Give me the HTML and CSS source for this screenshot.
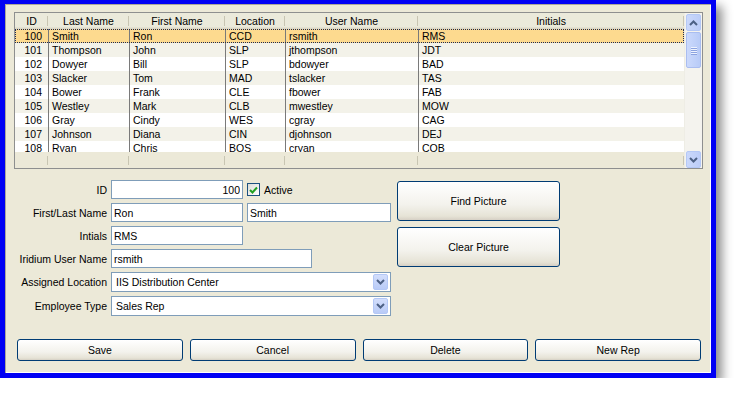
FILE: index.html
```html
<!DOCTYPE html>
<html lang="en">
<head>
    <meta charset="UTF-8">
    <title>Sales Reps</title>
    <link rel="stylesheet" href="styles.css">
</head>
<body>
    <div class="window">
        <div class="grid">
            <div class="grid-main">
                <div class="row head">
                    <div class="cell">ID</div>
                    <div class="cell">Last Name</div>
                    <div class="cell">First Name</div>
                    <div class="cell">Location</div>
                    <div class="cell">User Name</div>
                    <div class="cell">Initials</div>
                </div>
                <div class="grid-body">
                    <div class="row selected"><div class="cell num">100</div><div class="cell">Smith</div><div class="cell">Ron</div><div class="cell">CCD</div><div class="cell">rsmith</div><div class="cell">RMS</div></div>
                    <div class="row alt"><div class="cell num">101</div><div class="cell">Thompson</div><div class="cell">John</div><div class="cell">SLP</div><div class="cell">jthompson</div><div class="cell">JDT</div></div>
                    <div class="row"><div class="cell num">102</div><div class="cell">Dowyer</div><div class="cell">Bill</div><div class="cell">SLP</div><div class="cell">bdowyer</div><div class="cell">BAD</div></div>
                    <div class="row alt"><div class="cell num">103</div><div class="cell">Slacker</div><div class="cell">Tom</div><div class="cell">MAD</div><div class="cell">tslacker</div><div class="cell">TAS</div></div>
                    <div class="row"><div class="cell num">104</div><div class="cell">Bower</div><div class="cell">Frank</div><div class="cell">CLE</div><div class="cell">fbower</div><div class="cell">FAB</div></div>
                    <div class="row alt"><div class="cell num">105</div><div class="cell">Westley</div><div class="cell">Mark</div><div class="cell">CLB</div><div class="cell">mwestley</div><div class="cell">MOW</div></div>
                    <div class="row"><div class="cell num">106</div><div class="cell">Gray</div><div class="cell">Cindy</div><div class="cell">WES</div><div class="cell">cgray</div><div class="cell">CAG</div></div>
                    <div class="row alt"><div class="cell num">107</div><div class="cell">Johnson</div><div class="cell">Diana</div><div class="cell">CIN</div><div class="cell">djohnson</div><div class="cell">DEJ</div></div>
                    <div class="row"><div class="cell num">108</div><div class="cell">Ryan</div><div class="cell">Chris</div><div class="cell">BOS</div><div class="cell">cryan</div><div class="cell">COB</div></div>
                </div>
                <div class="row foot">
                    <div class="cell"></div><div class="cell"></div><div class="cell"></div><div class="cell"></div><div class="cell"></div><div class="cell"></div>
                </div>
            </div>
            <div class="vscroll">
                <div class="sb-btn">
                    <svg width="9" height="6" viewBox="0 0 9 6"><path d="M1 5 L4.5 1.5 L8 5" fill="none" stroke="#4d6185" stroke-width="2"/></svg>
                </div>
                <div class="sb-track">
                    <div class="sb-thumb">
                        <span></span><span></span><span></span><span></span>
                    </div>
                </div>
                <div class="sb-btn">
                    <svg width="9" height="6" viewBox="0 0 9 6"><path d="M1 1 L4.5 4.5 L8 1" fill="none" stroke="#4d6185" stroke-width="2"/></svg>
                </div>
            </div>
        </div>

        <div class="editor">
            <div class="fields">
                <div class="lbl">ID</div>
                <div class="line">
                    <input class="box short right" value="100">
                    <span class="check">
                        <svg width="9" height="8" viewBox="0 0 9 8"><path d="M1 4 L3.5 6.5 L8 1.5" fill="none" stroke="#21a121" stroke-width="2"/></svg>
                    </span>
                    <span>Active</span>
                </div>

                <div class="lbl">First/Last Name</div>
                <div class="line">
                    <input class="box short" value="Ron">
                    <input class="box last" value="Smith">
                </div>

                <div class="lbl">Intials</div>
                <div class="line"><input class="box short" value="RMS"></div>

                <div class="lbl">Iridium User Name</div>
                <div class="line"><input class="box medium" value="rsmith"></div>

                <div class="lbl">Assigned Location</div>
                <div class="combo">
                    <span>IIS Distribution Center</span>
                    <span class="drop"><svg width="9" height="6" viewBox="0 0 9 6"><path d="M1 1 L4.5 4.5 L8 1" fill="none" stroke="#4d6185" stroke-width="2"/></svg></span>
                </div>

                <div class="lbl">Employee Type</div>
                <div class="combo">
                    <span>Sales Rep</span>
                    <span class="drop"><svg width="9" height="6" viewBox="0 0 9 6"><path d="M1 1 L4.5 4.5 L8 1" fill="none" stroke="#4d6185" stroke-width="2"/></svg></span>
                </div>
            </div>
            <div class="pic-buttons">
                <button class="btn tall">Find Picture</button>
                <button class="btn tall">Clear Picture</button>
            </div>
        </div>

        <div class="actions">
            <button class="btn">Save</button>
            <button class="btn">Cancel</button>
            <button class="btn">Delete</button>
            <button class="btn">New Rep</button>
        </div>
    </div>
</body>
</html>
```

FILE: styles.css
```css
body {
    margin: 0;
    background: #fff;
    font-family: "Liberation Sans", Arial, sans-serif;
    font-size: 10.5px;
    color: #000;
}

.window {
    width: 706px;
    height: 369px;
    border: 5px solid #0000f4;
    border-top-width: 4px;
    background: #ece9d8;
    box-shadow: inset 1px 1px 0 #aca899, inset -1px -1px 0 #fff, 6px 6px 10px rgba(0, 0, 0, 0.45);
}

/* list view */
.grid {
    display: flex;
    width: 687px;
    height: 155px;
    margin: 8px 0 0 9px;
    border: 1px solid #8e8f8f;
    background: #fff;
}

.grid-main {
    width: 670px;
    display: flex;
    flex-direction: column;
}

.row {
    display: grid;
    grid-template-columns: 33px 81px 96px 60px 133px 1fr;
    height: 14px;
    line-height: 14px;
}

.cell {
    white-space: nowrap;
    overflow: hidden;
    padding-left: 3px;
    border-left: 1px solid #7a7a7a;
}

.cell:first-child {
    border-left: none;
}

.cell.num {
    text-align: right;
    padding-right: 6px;
}

.row.alt {
    background: #f3f2e9;
}

.row.selected {
    background: #fdda8f;
    outline: 1px dotted #1c2a55;
    outline-offset: -1px;
}

.row.head {
    height: 16px;
    line-height: 16px;
    background: linear-gradient(#ebeadb, #ebeadb 85%, #d6d2c2);
}

.row.head .cell {
    text-align: center;
    padding: 0;
    border-left: none;
    background: linear-gradient(#c8c5b2, #c8c5b2) right 3px / 1px 10px no-repeat;
}

.grid-body {
    height: 123px;
    overflow: hidden;
}

.row.foot {
    height: 16px;
    background: #ece9d8;
}

.row.foot .cell {
    border-left: none;
    padding: 0;
    background: linear-gradient(#c8c5b2, #c8c5b2) right 4px / 1px 9px no-repeat;
}

/* scrollbar */
.vscroll {
    width: 17px;
    display: flex;
    flex-direction: column;
    background: #f4f3ee;
    border-left: 1px solid #eeede5;
}

.sb-btn {
    height: 15px;
    margin: 1px 1px 0;
    display: flex;
    align-items: center;
    justify-content: center;
    border: 1px solid #b4c8f6;
    border-radius: 2px;
    background: linear-gradient(90deg, #cad8fb, #bccdf8);
}

.sb-btn:last-child {
    margin-bottom: 0;
}

.sb-track {
    flex: 1;
    padding: 0 1px;
}

.sb-thumb {
    height: 34px;
    margin-top: 1px;
    border: 1px solid #a9bdf0;
    border-radius: 2px;
    background: linear-gradient(90deg, #cbd9fc, #b8cbf7);
    display: flex;
    flex-direction: column;
    align-items: center;
    justify-content: center;
    gap: 1px;
}

.sb-thumb span {
    width: 6px;
    height: 1px;
    background: #eef3fe;
    box-shadow: 0 1px 0 #8ca3e0;
}

/* edit form */
.editor {
    display: flex;
    margin-top: 11px;
    padding-left: 5px;
}

.fields {
    display: grid;
    grid-template-columns: 97px 280px;
    column-gap: 4px;
    row-gap: 4px;
    align-items: center;
}

.lbl {
    text-align: right;
    white-space: nowrap;
}

.line {
    display: flex;
    align-items: center;
    gap: 4px;
}

.box {
    box-sizing: border-box;
    height: 19px;
    margin: 0;
    padding: 0 2px;
    border: 1px solid #7f9db9;
    background: #fff;
    font: inherit;
    color: #000;
}

.box.short {
    width: 132px;
}

.box.last {
    width: 144px;
}

.box.medium {
    width: 201px;
}

.box.right {
    text-align: right;
}

.check {
    box-sizing: border-box;
    width: 13px;
    height: 13px;
    display: flex;
    align-items: center;
    justify-content: center;
    border: 1px solid #1c5180;
    background: linear-gradient(135deg, #dcdcd7, #fff);
}

.combo {
    box-sizing: border-box;
    height: 20px;
    display: flex;
    align-items: center;
    justify-content: space-between;
    padding: 0 2px 0 4px;
    border: 1px solid #7f9db9;
    background: #fff;
}

.drop {
    box-sizing: border-box;
    width: 15px;
    height: 16px;
    display: flex;
    align-items: center;
    justify-content: center;
    border: 1px solid #b4c8f6;
    border-radius: 2px;
    background: linear-gradient(#d3defc, #b9cbf7);
}

.pic-buttons {
    display: flex;
    flex-direction: column;
    gap: 6px;
    margin: 1px 0 0 6px;
}

/* buttons */
.btn {
    height: 22px;
    border: 1px solid #003c74;
    border-radius: 3px;
    background: linear-gradient(#ffffff, #f3f2ec 60%, #e6e3d6 90%, #d6d0c5);
    font: inherit;
    color: #000;
    padding: 0;
}

.btn.tall {
    width: 163px;
    height: 40px;
}

.actions {
    display: grid;
    grid-template-columns: repeat(4, 1fr);
    gap: 7px;
    margin-top: 23px;
    padding: 0 10px 0 12px;
}
```
